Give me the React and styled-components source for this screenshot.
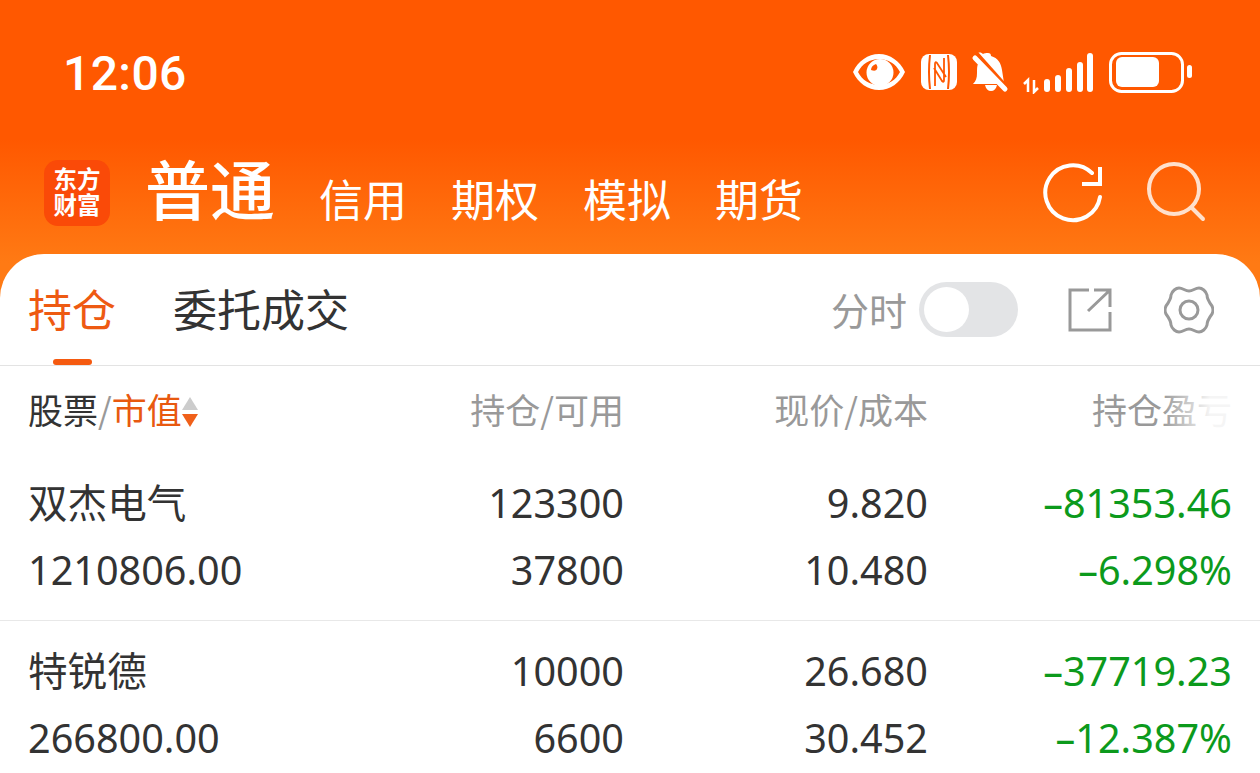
import React from "react";
import styled, { createGlobalStyle } from "styled-components";

const Global = createGlobalStyle`
  html, body { margin: 0; padding: 0; background: #fff; }
  body { width: 1260px; height: 773px; overflow: hidden; font-family: "Noto Sans", "Noto Sans CJK SC", sans-serif; }
`;
const Page = styled.div`
  width: 1260px; height: 773px; overflow: hidden; display: flex; flex-direction: column;
  background: linear-gradient(180deg, #ff5800 0%, #ff5800 18%, #ff7a14 34%);
`;
const StatusBar = styled.div`
  height: 146px; flex: none; display: flex; align-items: center; justify-content: space-between;
  padding: 0 65px 0 63px; box-sizing: border-box; color: #fff;
`;
const Time = styled.div`
  font: 500 48px/50px Roboto, sans-serif; letter-spacing: 0.4px; margin-top: 2px;
`;
const StatusIcons = styled.svg`
  display: block; width: 345px; height: 44px; margin-top: -2px;
`;
const NavBar = styled.div`
  height: 108px; flex: none; display: flex; align-items: flex-start; padding: 14px 52px 0 44px; box-sizing: border-box;
`;
const Logo = styled.div`
  width: 66px; height: 66px; border-radius: 14px; background: #fa4a08; color: #fff; margin-right: 35px; flex: none;
  display: flex; align-items: center; justify-content: center; text-align: center;
  box-sizing: border-box; font: 700 23.5px/26.500px "Liberation Sans", "Noto Sans CJK SC", sans-serif;
`;
const MainTab = styled.div`
  color: #fff; font: 500 65px/66px "Noto Sans CJK SC", sans-serif; width: 174px; flex: none; margin-top: -6px;
`;
const SubTab = styled.div`
  color: #fff; font: 400 44px/50px "Noto Sans CJK SC", sans-serif; width: 132px; flex: none; margin-top: 13px; white-space: nowrap;
`;
const NavActions = styled.div`
  margin-left: auto; display: flex; gap: 42px; margin-top: 1px;
`;
const Card = styled.div`
  flex: 1; background: #fff; border-radius: 44px 44px 0 0; display: flex; flex-direction: column; min-height: 0;
`;
const TabBar = styled.div`
  height: 112px; flex: none; box-sizing: border-box; border-bottom: 1px solid #e3e3e3; display: flex; align-items: flex-start;
  padding: 0 46px 0 28px;
`;
const Tab = styled.div`
  position: relative; height: 111px; margin-right: 57px; padding-top: 25px; box-sizing: border-box; white-space: nowrap;
  font: 400 44px/58px "Noto Sans CJK SC", sans-serif; color: ${p => (p.$active ? "#ee5a12" : "#333")};
  ${p => p.$active && `&::after { content: ""; position: absolute; left: 25px; bottom: 0; width: 39px; height: 6px; border-radius: 3px; background: #f55a10; }`}
`;
const Tools = styled.div`
  margin-left: auto; display: flex; align-items: center; height: 112px;
`;
const ToolLabel = styled.span`
  color: #999; font: 400 38px/56px "Noto Sans CJK SC", sans-serif; margin-right: 12px; margin-top: -3px;
`;
const Toggle = styled.div`
  width: 99px; height: 55px; border-radius: 28px; background: #e3e4e6; position: relative; margin-right: 50px; margin-top: -2px;
  &::after { content: ""; position: absolute; left: 5px; top: 5px; width: 45px; height: 45px; border-radius: 50%; background: #fff; }
`;
const IconWrap = styled.div`
  display: flex; margin-left: ${p => p.$ml || 0}px;
`;
const HeadRow = styled.div`
  height: 92px; flex: none; display: grid; grid-template-columns: 1fr 170px 304px 304px; padding: 0 28px 6px 28px; align-items: center; box-sizing: border-box;
  font: 400 35px/48px "Noto Sans CJK SC", sans-serif; color: #999; position: relative;
`;
const HeadFirst = styled.div`
  display: flex; align-items: center; color: #333;
`;
const Slash = styled.span`color: #999;`;
const Accent = styled.span`color: #e8590f;`;
const Sort = styled.svg`width: 18px; height: 32px; display: block; margin-top: 5px;`;
const HeadCell = styled.div`text-align: right; white-space: nowrap;`;
const Fade = styled.div`
  position: absolute; right: 24px; top: 17px; width: 74px; height: 50px; pointer-events: none;
  background: linear-gradient(90deg, rgba(255,255,255,0), rgba(255,255,255,0.9) 65%);
`;
const Row = styled.div`
  display: grid; grid-template-columns: 1fr 170px 304px 304px; padding: ${p => (p.$first ? "11px" : "16px")} 28px 17px 28px;
  grid-auto-rows: 67px; box-sizing: border-box; align-items: center;
  border-bottom: ${p => (p.$last ? "none" : "1px solid #e8e8e8")};
`;
const Name = styled.div`
  font: 400 39.6px/50px "Noto Sans", "Noto Sans CJK SC", sans-serif; color: #333; white-space: nowrap;
`;
const Value = styled.div`
  text-align: right; font: 400 39.6px/50px "Noto Sans", "Noto Sans CJK SC", sans-serif; color: ${p => (p.$green ? "#0c9a1c" : "#333")}; white-space: nowrap;
`;

const rows = [
  ["双杰电气", "123300", "9.820", "–81353.46", "1210806.00", "37800", "10.480", "–6.298%"],
  ["特锐德", "10000", "26.680", "–37719.23", "266800.00", "6600", "30.452", "–12.387%"],
];

const W = "#fff";
const O = "#ff5800";

export default function App() {
  return (
    <Page>
      <Global />
      <StatusBar>
        <Time>12:06</Time>
        <StatusIcons viewBox="850 50 345 44">
          <path fill={W} fillRule="evenodd" d="M879 54c-11 0-21 7-26 18 5 11 15 18 26 18s21-7 26-18c-5-11-15-18-26-18Zm0 5c9 0 17 5 21 13-4 8-12 13-21 13s-17-5-21-13c4-8 12-13 21-13Z" />
          <path fill={W} fillRule="evenodd" d="M880 59a13.500 13.500 0 1 0 0 27 13.500 13.500 0 0 0 0-27Zm-9 11c3 1 5 1 6-1s0-4-1-5c-3 1-5 3-5 6Z" />
          <rect x="921" y="54" width="36" height="36" rx="8" fill={W} />
          <path fill="none" stroke={O} strokeWidth="2" d="M930 55q-2 17 0 34M948 55q2 17 0 34" />
          <path fill="none" stroke={O} strokeWidth="1.800" d="M935 86V64q0-3 2-1l9 14M944 58v22q0 3-2 1l-8-13" />
          <path fill={W} d="M988 53c2 0 3 1 3 3 7 2 10 7 11 14l2 13-26-30c2-1 4 0 5 1 1-1 3-1 5-1Zm-10 11 23 20h-28c3-3 4-6 4-11 0-4 0-7 1-9Zm7 21h12c-1 4-3 6-6 6s-5-2-6-6Z" />
          <path stroke={O} strokeWidth="3" d="M976 52l32 36" />
          <path stroke={W} strokeWidth="5" strokeLinecap="round" d="M975 58l30 31" />
          <path stroke={W} strokeWidth="2.500" fill="none" d="M1028 92V80l-4 4" />
          <path stroke={W} strokeWidth="2.500" fill="none" d="M1034 80v12l4-4" />
          {[[1044,79],[1055,75],[1066,68],[1077,62],[1087,53]].map(([x, y]) => (
            <rect key={x} x={x} y={y} width="6" height={92 - y} rx="3" fill={W} />
          ))}
          <rect x="1110.500" y="53.500" width="72" height="38" rx="11" fill="none" stroke={W} strokeWidth="3" />
          <rect x="1116" y="57" width="43" height="30" rx="6" fill={W} />
          <rect x="1187" y="65" width="5" height="13" rx="2.500" fill={W} />
        </StatusIcons>
      </StatusBar>
      <NavBar>
        <Logo><div>东方<br />财富</div></Logo>
        <MainTab>普通</MainTab>
        <SubTab>信用</SubTab>
        <SubTab>期权</SubTab>
        <SubTab>模拟</SubTab>
        <SubTab>期货</SubTab>
        <NavActions>
          <svg width="62" height="62" viewBox="0 0 62 62" fill="none" stroke="#fff" strokeWidth="4" strokeLinecap="round">
            <path d="M58 36A27.500 27.500 0 1 1 50 12" />
            <path d="M58 6v17H40" strokeLinecap="butt" />
          </svg>
          <svg width="62" height="62" viewBox="0 0 62 62" fill="none" stroke="#ffe0cc" strokeWidth="4" strokeLinecap="round">
            <circle cx="28" cy="28" r="25" />
            <path d="M46 47l11 11" />
          </svg>
        </NavActions>
      </NavBar>
      <Card>
        <TabBar>
          <Tab $active>持仓</Tab>
          <Tab>委托成交</Tab>
          <Tools>
            <ToolLabel>分时</ToolLabel>
            <Toggle />
            <svg width="44" height="44" viewBox="0 0 44 44" fill="none" stroke="#999" strokeWidth="3">
              <path d="M21 2H2v40h40V24" />
              <path d="M20 23 41 3M26 2h16v17" />
            </svg>
            <IconWrap $ml={52}>
              <svg width="50" height="50" viewBox="0 0 50 50" fill="none" stroke="#999" strokeWidth="3" strokeLinejoin="round">
                <path d="M25 6C29 6 31 3 35 3C38 3 42 6 43 10C43 14 45 17 48 21C49 23 49 27 48 29C45 33 43 36 43 40C42 44 38 47 35 47C31 47 29 44 25 44C21 44 19 47 15 47C12 47 8 44 7 40C7 36 5 33 2 29C1 27 1 23 2 21C5 17 7 14 7 10C8 6 12 3 15 3C19 3 21 6 25 6Z" />
                <circle cx="25" cy="25" r="9" />
              </svg>
            </IconWrap>
          </Tools>
        </TabBar>
        <HeadRow>
          <HeadFirst>
            股票<Slash>/</Slash><Accent>市值</Accent>
            <Sort viewBox="0 0 18 32">
              <path d="M8 1l8 13H0Z" fill="#ccc" />
              <path d="M0 18h16l-8 13Z" fill="#f0601a" />
            </Sort>
          </HeadFirst>
          <HeadCell>持仓/可用</HeadCell>
          <HeadCell>现价/成本</HeadCell>
          <HeadCell>持仓盈亏</HeadCell>
          <Fade />
        </HeadRow>
        {rows.map((r, i) => (
          <Row key={r[0]} $first={i === 0} $last={i === 1}>
            <Name>{r[0]}</Name>
            <Value>{r[1]}</Value>
            <Value>{r[2]}</Value>
            <Value $green>{r[3]}</Value>
            <Name>{r[4]}</Name>
            <Value>{r[5]}</Value>
            <Value>{r[6]}</Value>
            <Value $green>{r[7]}</Value>
          </Row>
        ))}
      </Card>
    </Page>
  );
}
